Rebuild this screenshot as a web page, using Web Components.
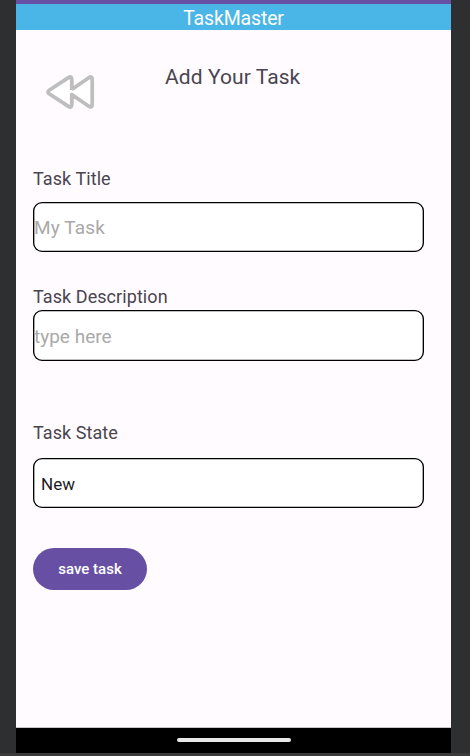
<!DOCTYPE html>
<html lang="en"><head><meta charset="utf-8"><title>TaskMaster</title>
<style>html,body{margin:0;height:100%;overflow:hidden;background:#2e2f31}</style></head>
<body>
<phone-screen>
  <app-bar>TaskMaster</app-bar>
  <page-head>Add Your Task</page-head>
  <form-field style="--gap:12px;--after:34px;--ls:.15px" label="Task Title"><span>My Task</span></form-field>
  <form-field style="--gap:2px;--after:61px;--h:51px;--line:51px" label="Task Description"><span>type here</span></form-field>
  <form-field style="--gap:14px;--after:40px" label="Task State" selected><span>New</span></form-field>
  <save-button>save task</save-button>
  <nav-bar slot="nav"></nav-bar>
</phone-screen>
<script>
function define(name, html) {
  const t = document.createElement('template');
  t.innerHTML = html;
  customElements.define(name, class extends HTMLElement {
    constructor() {
      super();
      this.attachShadow({mode: 'open'}).appendChild(t.content.cloneNode(true));
    }
    connectedCallback() {
      const l = this.shadowRoot.querySelector('label');
      if (l) l.textContent = this.getAttribute('label');
    }
  });
}
define('phone-screen', `<style>
:host{display:flex;flex-direction:column;box-sizing:border-box;width:470px;height:756px;padding:0 19px 0 16px;border-bottom:3px solid #3b3b3c;background:#2e2f31;font-family:Roboto,sans-serif;color:#49454f}
main{flex:1;display:flex;flex-direction:column;background:#fffbff;min-height:0}
</style><main><slot></slot></main><slot name="nav"></slot>`);
define('app-bar', `<style>
:host{display:block;height:26px;border-top:4px solid #6750a4;background:#4ab5e7;color:#fff;text-align:center;font-size:19.5px;line-height:29px;letter-spacing:-.15px}
</style><slot></slot>`);
define('page-head', `<style>
:host{display:grid;grid-template-columns:149px 1fr;height:138px;font-size:21px;line-height:26px;letter-spacing:.08px}
svg{display:block;margin:42px 0 0 27px}
div{padding-top:34px}
</style><svg width="56" height="40" viewBox="43 72 56 40" fill="#fff" stroke="#bebebe" stroke-width="3.8" stroke-linejoin="round"><path d="M71.8 89.5V79.5Q71.8 75.6 68.5 77.7L49.5 90Q46.5 92 49.5 94L68.5 106.3Q71.8 108.4 71.8 104.5V94.5L88.7 106.2Q92.2 108.4 92.2 104.5V79.5Q92.2 75.6 88.7 77.8Z" stroke="none"/><path d="M71.8 90V79.5Q71.8 75.6 68.5 77.7L49.5 90Q46.5 92 49.5 94L68.5 106.3Q71.8 108.4 71.8 104.5V94.5L88.7 106.2Q92.2 108.4 92.2 104.5V79.5Q92.2 75.6 88.7 77.8L71.8 89.5"/></svg><div><slot></slot></div>`);
define('form-field', `<style>
:host{display:block;padding:0 27px 0 17px;margin-bottom:var(--after)}
label{display:block;height:22px;line-height:22px;font-size:18px;letter-spacing:.07px;margin-bottom:var(--gap);white-space:nowrap}
.box{box-sizing:border-box;width:391px;height:var(--h,50px);padding:1px;box-shadow:inset 0 0 0 1.35px #000;border-radius:9px;background:#fff;color:#a9a9a9;font-size:19px;line-height:var(--line,49px);letter-spacing:var(--ls,0)}
:host([selected]) .box{color:#1c1b1f;font-size:17px;line-height:50px;padding-left:8px;letter-spacing:0}
</style><label></label><div class="box"><slot></slot></div>`);
define('save-button', `<style>
:host{display:block;margin-left:17px;width:114px;height:42px;border-radius:21px;background:#6750a4;color:#fff;text-align:center;font-weight:500;font-size:15px;line-height:43px}
</style><slot></slot>`);
define('nav-bar', `<style>
:host{display:flex;box-sizing:border-box;height:26px;padding-bottom:1px;border-top:1px solid #c8c6c8;background:#000;align-items:center;justify-content:center}
i{width:114px;height:4px;border-radius:2px;background:#e8e8e8}
</style><i></i>`);
</script></body></html>
